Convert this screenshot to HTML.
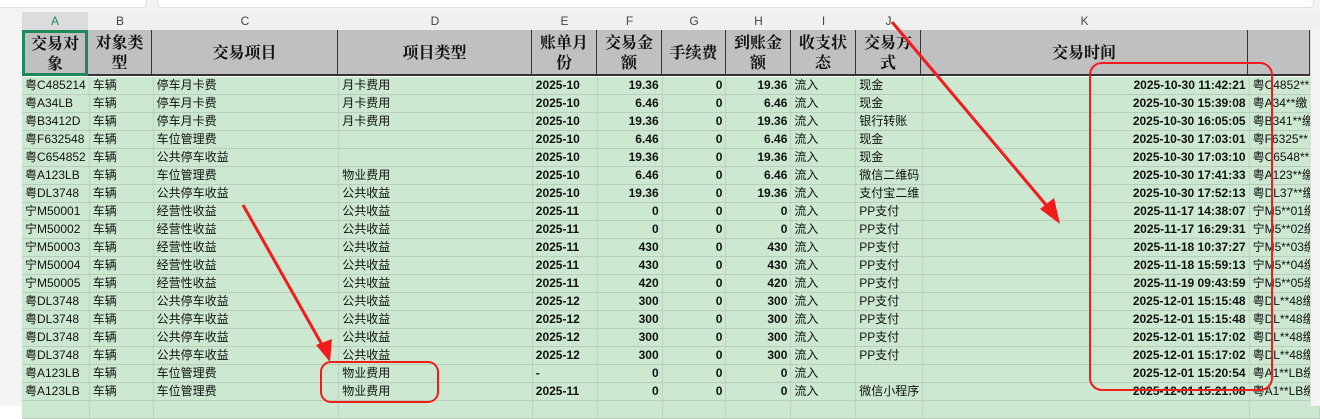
<!DOCTYPE html>
<html><head><meta charset="utf-8"><style>
body{margin:0;width:1320px;height:406px;overflow:hidden;background:#fff;font-family:"Liberation Sans","Noto Sans CJK SC",sans-serif;position:relative}
.top{position:absolute;left:0;top:0;width:1320px;height:12px;background:#f3f3f3}
.top div{position:absolute;top:-6px;height:12px;background:#fff;border:1px solid #ddd;border-radius:4px}
.gut{position:absolute;left:0;top:12px;width:22px;height:394px;background:#f4f4f4;border-right:1px solid #d8d8d8}
.colh{position:absolute;top:12px;height:18px;background:#f0f0f0;border-right:1px solid #dcdcdc;font-size:12px;color:#444;text-align:center;line-height:18px}
.hd{position:absolute;top:30px;height:46px;background:#c0c0c0;border-right:1px solid #333;border-bottom:2px solid #333;box-sizing:border-box;font-family:"Noto Serif CJK SC",serif;font-weight:bold;font-size:16px;line-height:20px;display:flex;align-items:center;justify-content:center;text-align:center;color:#111}
table{position:absolute;left:22px;top:77px;border-collapse:collapse;table-layout:fixed}
td{height:17px;padding:0 3px;border-right:1px solid #bcd3bf;border-bottom:1px solid #b9cdbb;background:#cce8d1;font-size:12px;line-height:17px;white-space:nowrap;overflow:hidden;color:#111}
td.r{text-align:right}td.b{font-weight:bold;font-size:12px}
</style></head><body>
<div class="top"><div style="left:-5px;width:150px"></div><div style="left:157px;width:1155px"></div></div>
<div class="gut"></div>
<div class="colh" style="left:22px;width:66px;background:#dcdcdc;color:#1e8a5a">A</div>
<div class="colh" style="left:88px;width:64px">B</div>
<div class="colh" style="left:152px;width:186px">C</div>
<div class="colh" style="left:338px;width:194px">D</div>
<div class="colh" style="left:532px;width:65px">E</div>
<div class="colh" style="left:597px;width:65px">F</div>
<div class="colh" style="left:662px;width:64px">G</div>
<div class="colh" style="left:726px;width:65px">H</div>
<div class="colh" style="left:791px;width:65px">I</div>
<div class="colh" style="left:856px;width:65px">J</div>
<div class="colh" style="left:921px;width:327px">K</div>
<div class="colh" style="left:1248px;width:72px"></div>
<div class="hd" style="left:22px;width:66px;border:3px solid #1e8a5a">交易对<br>象</div>
<div class="hd" style="left:88px;width:64px">对象类<br>型</div>
<div class="hd" style="left:152px;width:186px">交易项目</div>
<div class="hd" style="left:338px;width:194px">项目类型</div>
<div class="hd" style="left:532px;width:65px">账单月<br>份</div>
<div class="hd" style="left:597px;width:65px">交易金<br>额</div>
<div class="hd" style="left:662px;width:64px">手续费</div>
<div class="hd" style="left:726px;width:65px">到账金<br>额</div>
<div class="hd" style="left:791px;width:65px">收支状<br>态</div>
<div class="hd" style="left:856px;width:65px">交易方<br>式</div>
<div class="hd" style="left:921px;width:327px">交易时间</div>
<div class="hd" style="left:1248px;width:62px"></div>
<table>
<colgroup><col style="width:66px"><col style="width:64px"><col style="width:186px"><col style="width:194px"><col style="width:65px"><col style="width:65px"><col style="width:64px"><col style="width:65px"><col style="width:65px"><col style="width:65px"><col style="width:327px"><col style="width:62px"></colgroup>
<tr><td>粤C485214</td><td>车辆</td><td>停车月卡费</td><td>月卡费用</td><td class="b">2025-10</td><td class="r b">19.36</td><td class="r b">0</td><td class="r b">19.36</td><td>流入</td><td>现金</td><td class="r b">2025-10-30 11:42:21</td><td>粤C4852**</td></tr>
<tr><td>粤A34LB</td><td>车辆</td><td>停车月卡费</td><td>月卡费用</td><td class="b">2025-10</td><td class="r b">6.46</td><td class="r b">0</td><td class="r b">6.46</td><td>流入</td><td>现金</td><td class="r b">2025-10-30 15:39:08</td><td>粤A34**缴</td></tr>
<tr><td>粤B3412D</td><td>车辆</td><td>停车月卡费</td><td>月卡费用</td><td class="b">2025-10</td><td class="r b">19.36</td><td class="r b">0</td><td class="r b">19.36</td><td>流入</td><td>银行转账</td><td class="r b">2025-10-30 16:05:05</td><td>粤B341**缴</td></tr>
<tr><td>粤F632548</td><td>车辆</td><td>车位管理费</td><td></td><td class="b">2025-10</td><td class="r b">6.46</td><td class="r b">0</td><td class="r b">6.46</td><td>流入</td><td>现金</td><td class="r b">2025-10-30 17:03:01</td><td>粤F6325**</td></tr>
<tr><td>粤C654852</td><td>车辆</td><td>公共停车收益</td><td></td><td class="b">2025-10</td><td class="r b">19.36</td><td class="r b">0</td><td class="r b">19.36</td><td>流入</td><td>现金</td><td class="r b">2025-10-30 17:03:10</td><td>粤C6548**</td></tr>
<tr><td>粤A123LB</td><td>车辆</td><td>车位管理费</td><td>物业费用</td><td class="b">2025-10</td><td class="r b">6.46</td><td class="r b">0</td><td class="r b">6.46</td><td>流入</td><td>微信二维码</td><td class="r b">2025-10-30 17:41:33</td><td>粤A123**缴</td></tr>
<tr><td>粤DL3748</td><td>车辆</td><td>公共停车收益</td><td>公共收益</td><td class="b">2025-10</td><td class="r b">19.36</td><td class="r b">0</td><td class="r b">19.36</td><td>流入</td><td>支付宝二维</td><td class="r b">2025-10-30 17:52:13</td><td>粤DL37**缴</td></tr>
<tr><td>宁M50001</td><td>车辆</td><td>经营性收益</td><td>公共收益</td><td class="b">2025-11</td><td class="r b">0</td><td class="r b">0</td><td class="r b">0</td><td>流入</td><td>PP支付</td><td class="r b">2025-11-17 14:38:07</td><td>宁M5**01缴</td></tr>
<tr><td>宁M50002</td><td>车辆</td><td>经营性收益</td><td>公共收益</td><td class="b">2025-11</td><td class="r b">0</td><td class="r b">0</td><td class="r b">0</td><td>流入</td><td>PP支付</td><td class="r b">2025-11-17 16:29:31</td><td>宁M5**02缴</td></tr>
<tr><td>宁M50003</td><td>车辆</td><td>经营性收益</td><td>公共收益</td><td class="b">2025-11</td><td class="r b">430</td><td class="r b">0</td><td class="r b">430</td><td>流入</td><td>PP支付</td><td class="r b">2025-11-18 10:37:27</td><td>宁M5**03缴</td></tr>
<tr><td>宁M50004</td><td>车辆</td><td>经营性收益</td><td>公共收益</td><td class="b">2025-11</td><td class="r b">430</td><td class="r b">0</td><td class="r b">430</td><td>流入</td><td>PP支付</td><td class="r b">2025-11-18 15:59:13</td><td>宁M5**04缴</td></tr>
<tr><td>宁M50005</td><td>车辆</td><td>经营性收益</td><td>公共收益</td><td class="b">2025-11</td><td class="r b">420</td><td class="r b">0</td><td class="r b">420</td><td>流入</td><td>PP支付</td><td class="r b">2025-11-19 09:43:59</td><td>宁M5**05缴</td></tr>
<tr><td>粤DL3748</td><td>车辆</td><td>公共停车收益</td><td>公共收益</td><td class="b">2025-12</td><td class="r b">300</td><td class="r b">0</td><td class="r b">300</td><td>流入</td><td>PP支付</td><td class="r b">2025-12-01 15:15:48</td><td>粤DL**48缴</td></tr>
<tr><td>粤DL3748</td><td>车辆</td><td>公共停车收益</td><td>公共收益</td><td class="b">2025-12</td><td class="r b">300</td><td class="r b">0</td><td class="r b">300</td><td>流入</td><td>PP支付</td><td class="r b">2025-12-01 15:15:48</td><td>粤DL**48缴</td></tr>
<tr><td>粤DL3748</td><td>车辆</td><td>公共停车收益</td><td>公共收益</td><td class="b">2025-12</td><td class="r b">300</td><td class="r b">0</td><td class="r b">300</td><td>流入</td><td>PP支付</td><td class="r b">2025-12-01 15:17:02</td><td>粤DL**48缴</td></tr>
<tr><td>粤DL3748</td><td>车辆</td><td>公共停车收益</td><td>公共收益</td><td class="b">2025-12</td><td class="r b">300</td><td class="r b">0</td><td class="r b">300</td><td>流入</td><td>PP支付</td><td class="r b">2025-12-01 15:17:02</td><td>粤DL**48缴</td></tr>
<tr><td>粤A123LB</td><td>车辆</td><td>车位管理费</td><td>物业费用</td><td class="b">-</td><td class="r b">0</td><td class="r b">0</td><td class="r b">0</td><td>流入</td><td></td><td class="r b">2025-12-01 15:20:54</td><td>粤A1**LB缴</td></tr>
<tr><td>粤A123LB</td><td>车辆</td><td>车位管理费</td><td>物业费用</td><td class="b">2025-11</td><td class="r b">0</td><td class="r b">0</td><td class="r b">0</td><td>流入</td><td>微信小程序</td><td class="r b">2025-12-01 15:21:08</td><td>粤A1**LB缴</td></tr>
<tr><td></td><td></td><td></td><td></td><td></td><td></td><td></td><td></td><td></td><td></td><td></td><td></td></tr>
</table>
<div style="position:absolute;left:1310px;top:30px;width:10px;height:376px;background:#f4f4f4;border-left:1px solid #ddd"></div>
<svg style="position:absolute;left:0;top:0" width="1320" height="406">
<g fill="none" stroke="#f21c1c" stroke-width="2">
<rect x="1090" y="63" width="182" height="327" rx="12"/>
<rect x="321" y="362" width="117" height="40" rx="10"/>
</g>
<g stroke="#f21c1c" stroke-width="3">
<line x1="892" y1="22" x2="1052" y2="212"/>
<line x1="243" y1="205" x2="325" y2="350"/>
</g>
<g fill="#f21c1c">
<polygon points="1060,224 1040,209 1054,198"/>
<polygon points="330,362 316,345 332,339"/>
</g>
</svg>
</body></html>
